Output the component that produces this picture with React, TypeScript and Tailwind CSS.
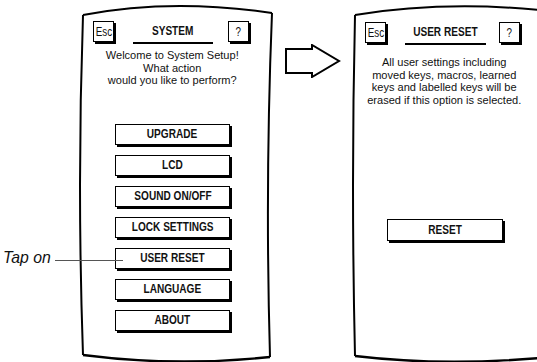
import React from "react";

const font = { fontFamily: '"Liberation Sans", Arial, sans-serif' };

function SmallKey({ label }: { label: string }) {
  return (
    <div className="w-[21px] h-[21px] border border-black bg-white shadow-[2px_2px_0_#000] flex items-center justify-center text-[#111] leading-none shrink-0">
      <span className="inline-block text-[12px] scale-x-[0.82]">{label}</span>
    </div>
  );
}

function Title({ text, w }: { text: string; w: string }) {
  return (
    <div className={`${w} h-[23px] border-b-2 border-black flex items-center justify-center text-[#111] leading-none pb-[2px] shrink-0`}>
      <span className="inline-block text-[12px] font-bold scale-x-[0.84] whitespace-nowrap">{text}</span>
    </div>
  );
}

function MenuButton({ label, w = "w-[115px]", h = "h-[21px]" }: { label: string; w?: string; h?: string }) {
  return (
    <div className={`${w} ${h} border border-black bg-white shadow-[2px_2px_0_#000] flex items-center justify-center text-[#111] leading-none`}>
      <span className="inline-block text-[12px] font-bold scale-x-[0.84] whitespace-nowrap">{label}</span>
    </div>
  );
}

export default function App() {
  return (
    <div className="relative w-[537px] h-[362px] overflow-hidden bg-white flex" style={font}>
      {/* left margin */}
      <div className="w-[79px] shrink-0" />

      {/* phone 1 */}
      <div className="relative w-[196px] h-[362px] shrink-0">
        <svg className="absolute inset-0" width="196" height="362" viewBox="0 0 196 362" fill="none">
          <path d="M4 15 Q92 -2 193 13" stroke="#000" strokeWidth="2" />
          <path d="M193 13 Q186 185 191 357" stroke="#000" strokeWidth="2" />
          <path d="M191 357 Q96 367 4 355" stroke="#000" strokeWidth="2.4" />
          <path d="M4 355 Q-2 185 4 15" stroke="#000" strokeWidth="2" />
        </svg>
        <div className="relative flex flex-col">
          <div className="flex items-start pl-[14px] pt-[21px]">
            <SmallKey label="Esc" />
            <div className="ml-[19px]">
              <Title text="SYSTEM" w="w-[80px]" />
            </div>
            <div className="ml-[15px]">
              <SmallKey label="?" />
            </div>
          </div>
          <div className="w-[186px] mt-[5px] text-center text-[11.5px] leading-[12.5px] text-[#111]">
            <span className="inline-block scale-x-[0.96]">
              Welcome to System Setup!
              <br />
              What action
              <br />
              would you like to perform?
            </span>
          </div>
          <div className="ml-[36px] mt-[37px] flex flex-col gap-[10px]">
            <MenuButton label="UPGRADE" />
            <MenuButton label="LCD" />
            <MenuButton label="SOUND ON/OFF" />
            <MenuButton label="LOCK SETTINGS" />
            <MenuButton label="USER RESET" />
            <MenuButton label="LANGUAGE" />
            <MenuButton label="ABOUT" />
          </div>
        </div>
      </div>

      {/* arrow */}
      <div className="w-[76px] shrink-0">
        <svg className="ml-[10px] mt-[44px]" width="56" height="34" viewBox="0 0 56 34" fill="none">
          <polygon points="1,5 27,5 27,1 54,17 27,33 27,29 1,29" fill="#fff" stroke="#000" strokeWidth="2" strokeLinejoin="miter" />
        </svg>
      </div>

      {/* phone 2 */}
      <div className="relative w-[186px] h-[362px] shrink-0">
        <svg className="absolute inset-0" width="186" height="362" viewBox="0 0 186 362" fill="none">
          <path d="M4 15 Q95 0 200 11" stroke="#000" strokeWidth="2" />
          <path d="M4 15 Q0 185 4 356" stroke="#000" strokeWidth="2" />
          <path d="M4 356 Q95 367 200 357" stroke="#000" strokeWidth="2.4" />
        </svg>
        <div className="relative flex flex-col">
          <div className="flex items-start pl-[14px] pt-[22px]">
            <SmallKey label="Esc" />
            <div className="ml-[19px]">
              <Title text="USER RESET" w="w-[81px]" />
            </div>
            <div className="ml-[13px]">
              <SmallKey label="?" />
            </div>
          </div>
          <div className="w-[186px] mt-[11px] text-center text-[11.5px] leading-[12.5px] text-[#111]">
            <span className="inline-block scale-x-[0.96]">
              All user settings including
              <br />
              moved keys, macros, learned
              <br />
              keys and labelled keys will be
              <br />
              erased if this option is selected.
            </span>
          </div>
          <div className="ml-[36px] mt-[113px]">
            <MenuButton label="RESET" w="w-[116px]" h="h-[22px]" />
          </div>
        </div>
      </div>

      {/* annotation */}
      <div className="absolute left-[3px] top-[249px] leading-none text-[#111]">
        <span className="inline-block origin-left text-[17px] italic scale-x-[0.93]">Tap on</span>
      </div>
      <div className="absolute left-[55px] top-[260px] w-[68px] h-px bg-[#555]" />
    </div>
  );
}
